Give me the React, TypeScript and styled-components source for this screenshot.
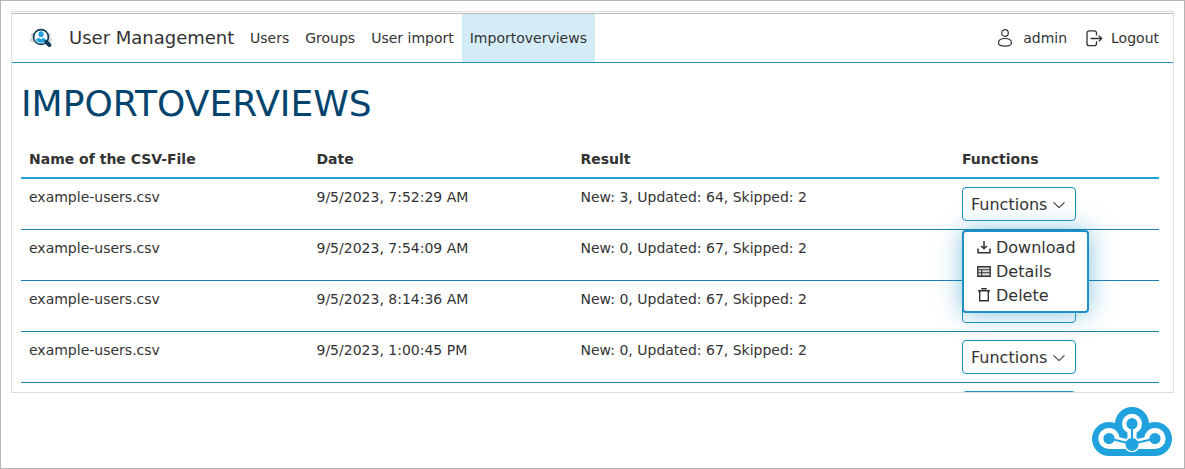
import React from 'react';
import styled, { createGlobalStyle } from 'styled-components';

const Global = createGlobalStyle`
  *, *::before, *::after { box-sizing: border-box; }
  body {
    margin: 0;
    background: #fff;
    color: #333;
    font: 14px/21px "DejaVu Sans", sans-serif;
  }
`;

const Page = styled.div`
  display: flex;
  flex-direction: column;
  width: 1185px;
  height: 469px;
  padding: 10px;
  border: 1px solid #b5b5b5;
  overflow: hidden;
`;

const Frame = styled.div`
  flex: none;
  width: 1163px;
  height: 382px;
  padding-top: 1px;
  border: 1px solid #ddd;
  overflow: hidden;
`;

const Navbar = styled.nav`
  display: flex;
  align-items: stretch;
  height: 50px;
  padding: 0 14px 0 17px;
  border-top: 1px solid #bbb;
  border-bottom: 1px solid #1f90c4;
`;

const Brand = styled.div`
  display: flex;
  align-items: center;
  gap: 16px;
  width: 213px;
  font-size: 18px;
  line-height: 24px;
  white-space: nowrap;
`;

const NavItem = styled.a<{ $active?: boolean }>`
  display: flex;
  align-items: center;
  padding: 0 8px;
  white-space: nowrap;
  background: ${(p) => (p.$active ? '#d4ecf8' : 'transparent')};
`;

const Account = styled.div`
  display: flex;
  align-items: center;
  gap: 19px;
  margin-left: auto;
`;

const AccountLink = styled.a<{ $gap: number }>`
  display: flex;
  align-items: center;
  gap: ${(p) => p.$gap}px;
`;

const Content = styled.main`
  padding: 19px 14px 0 9px;
`;

const Title = styled.h1`
  margin: 0 0 15px 0;
  color: #00446e;
  font-size: 36px;
  font-weight: 400;
  line-height: 43px;
  text-transform: uppercase;
`;

const Table = styled.table`
  width: 1138px;
  table-layout: fixed;
  border-collapse: separate;
  border-spacing: 0;
`;

const HeadCell = styled.th<{ $width: number }>`
  width: ${(p) => p.$width}px;
  height: 39px;
  padding: 9px 8px 7px;
  border-bottom: 2px solid #1fa2de;
  text-align: left;
  font-weight: 700;
`;

const Cell = styled.td`
  height: 51px;
  padding: 8px;
  border-bottom: 1px solid #177fae;
  vertical-align: top;
`;

const Dropdown = styled.div`
  position: relative;
  width: 114px;
`;

const DropdownButton = styled.button`
  display: flex;
  align-items: center;
  justify-content: space-between;
  width: 114px;
  height: 34px;
  padding: 5px 10px 3px 8px;
  border: 1px solid #1f90c4;
  border-radius: 4px;
  background: #fff;
  color: #333;
  font: 16px/24px "DejaVu Sans", sans-serif;
  svg { margin-top: -1px; }
`;

const Menu = styled.div`
  position: absolute;
  z-index: 2;
  top: 43px;
  left: 0;
  width: 127px;
  height: 83px;
  padding: 4px 0 0 13px;
  border: 2px solid #1f90c4;
  border-radius: 4px;
  background: #fff;
  box-shadow: 0 0 24px rgba(31, 144, 196, 0.55);
`;

const MenuItem = styled.div`
  display: flex;
  align-items: center;
  gap: 5px;
  font-size: 16px;
  line-height: 24px;
  svg { margin-top: -2px; }
`;

const Footer = styled.footer`
  display: flex;
  justify-content: flex-end;
  padding: 14px 2px 0 0;
`;

const SearchUserIcon = () => (
  <svg width="24" height="20" viewBox="0 0 24 20">
    <g fill="#d2d5d7">
      <circle cx="4.5" cy="7.5" r="2.6" />
      <circle cx="19" cy="7.5" r="2.6" />
      <ellipse cx="5" cy="12" rx="4.2" ry="2.2" />
      <ellipse cx="19" cy="12" rx="4.2" ry="2.2" />
    </g>
    <circle cx="12" cy="9" r="7.4" fill="#fff" stroke="#0a3b59" strokeWidth="1.6" />
    <ellipse cx="12" cy="6.3" rx="2.6" ry="3" fill="#1fa2de" />
    <path d="M7 11.5c1-1 2.200-1.500 3.200-1.500L12 11.300l1.800-1.300c1 0 2.200.5 3.200 1.500-.9 2.100-2.600 3.300-5 3.300s-4.100-1.200-5-3.300z" fill="#1fa2de" />
    <path d="M17.200 13.800l3.200 3.200" stroke="#0a3b59" strokeWidth="4" strokeLinecap="round" />
  </svg>
);

const PersonIcon = () => (
  <svg width="16" height="18" viewBox="0 0 16 18" fill="none" stroke="#333" strokeWidth="1.2">
    <circle cx="8" cy="4" r="3.3" />
    <path d="M1.500 14C1.500 11 4.300 9.500 8 9.500s6.500 1.500 6.500 4.500c0 2.300-2.600 3.100-6.500 3.100S1.500 16.300 1.500 14z" />
  </svg>
);

const LogoutIcon = () => (
  <svg width="17" height="17" viewBox="0 0 17 17" fill="none" stroke="#333" strokeWidth="1.3">
    <path d="M10.500 5.500V3a2.200 2.200 0 0 0-2.200-2.200H3.200A2.200 2.200 0 0 0 1 3v10.500a2.200 2.200 0 0 0 2.200 2.200h5.100a2.200 2.200 0 0 0 2.200-2.200v-2.300" />
    <path d="M4.500 8.500h11.200M12.800 5.800l2.900 2.700-2.900 2.700" />
  </svg>
);

const ChevronIcon = () => (
  <svg width="12" height="8" viewBox="0 0 12 8" fill="none" stroke="#333" strokeWidth="1.1">
    <path d="M.5 1.300L6 6.600l5.500-5.300" />
  </svg>
);

const DownloadIcon = () => (
  <svg width="14" height="14" viewBox="0 0 14 14" fill="none" stroke="#333" strokeWidth="1.5">
    <path d="M1 8.500v4.300h12V8.500M7 1v7.500M4.200 6L7 8.800 9.800 6" />
  </svg>
);

const DetailsIcon = () => (
  <svg width="14" height="14" viewBox="0 0 14 14" fill="none" stroke="#333">
    <path d="M.8 2.700h12.400v9.600H.8z" fill="#dcdcdc" strokeWidth="1.4" />
    <path d="M1 5.700h12M1 8.800h12M4.700 5.700V12" strokeWidth="1.1" />
  </svg>
);

const DeleteIcon = () => (
  <svg width="14" height="14" viewBox="0 0 14 14" fill="none" stroke="#333" strokeWidth="1.4">
    <path d="M4.200.7h5.600M1 2.700h12M2.700 2.700v10.100h8.600V2.700" />
  </svg>
);

const CloudLogo = () => (
  <svg width="80" height="50" viewBox="0 0 80 50">
    <g fill="#1fa2de">
      <circle cx="17" cy="32" r="17" />
      <circle cx="63" cy="32" r="17" />
      <circle cx="40" cy="17" r="17" />
      <path d="M17 25h46v24H17z" />
    </g>
    <g fill="#fff">
      <circle cx="17" cy="31.5" r="10.6" />
      <circle cx="63" cy="31.5" r="10.6" />
      <circle cx="40" cy="16.7" r="10" />
      <circle cx="40" cy="37.3" r="8" />
      <path d="M35.500 22h9v13h-9zM17 36h46v6.100H17z" />
    </g>
    <path
      d="M17 31.500L40 37l23-5.500M40 16.700V37"
      fill="none"
      stroke="#fff"
      strokeWidth="7"
    />
    <path
      d="M17 31.500L40 37l23-5.500M40 16.700V37"
      fill="none"
      stroke="#1fa2de"
      strokeWidth="2.1"
    />
    <g fill="#1fa2de">
      <circle cx="17" cy="31.5" r="5.6" />
      <circle cx="63" cy="31.5" r="5.6" />
      <circle cx="40" cy="16.7" r="5.6" />
      <circle cx="40" cy="37.4" r="6.5" />
    </g>
  </svg>
);

const rows = [
  { date: '9/5/2023, 7:52:29 AM', result: 'New: 3, Updated: 64, Skipped: 2', open: true },
  { date: '9/5/2023, 7:54:09 AM', result: 'New: 0, Updated: 67, Skipped: 2' },
  { date: '9/5/2023, 8:14:36 AM', result: 'New: 0, Updated: 67, Skipped: 2' },
  { date: '9/5/2023, 1:00:45 PM', result: 'New: 0, Updated: 67, Skipped: 2' },
  { date: '', result: '' },
];

export default function App() {
  return (
    <Page>
      <Global />
      <Frame>
        <Navbar>
          <Brand><SearchUserIcon />User Management</Brand>
          <NavItem>Users</NavItem>
          <NavItem>Groups</NavItem>
          <NavItem>User import</NavItem>
          <NavItem $active>Importoverviews</NavItem>
          <Account>
            <AccountLink $gap={10}><PersonIcon />admin</AccountLink>
            <AccountLink $gap={8}><LogoutIcon />Logout</AccountLink>
          </Account>
        </Navbar>
        <Content>
          <Title>Importoverviews</Title>
          <Table>
            <thead>
              <tr>
                <HeadCell $width={287.5}>Name of the CSV-File</HeadCell>
                <HeadCell $width={264}>Date</HeadCell>
                <HeadCell $width={381.5}>Result</HeadCell>
                <HeadCell $width={205}>Functions</HeadCell>
              </tr>
            </thead>
            <tbody>
              {rows.map((row, i) => (
                <tr key={i}>
                  <Cell>{row.date && 'example-users.csv'}</Cell>
                  <Cell>{row.date}</Cell>
                  <Cell>{row.result}</Cell>
                  <Cell>
                    <Dropdown>
                      <DropdownButton>{row.date && <>Functions<ChevronIcon /></>}</DropdownButton>
                      {row.open && (
                        <Menu>
                          <MenuItem><DownloadIcon />Download</MenuItem>
                          <MenuItem><DetailsIcon />Details</MenuItem>
                          <MenuItem><DeleteIcon />Delete</MenuItem>
                        </Menu>
                      )}
                    </Dropdown>
                  </Cell>
                </tr>
              ))}
            </tbody>
          </Table>
        </Content>
      </Frame>
      <Footer><CloudLogo /></Footer>
    </Page>
  );
}
